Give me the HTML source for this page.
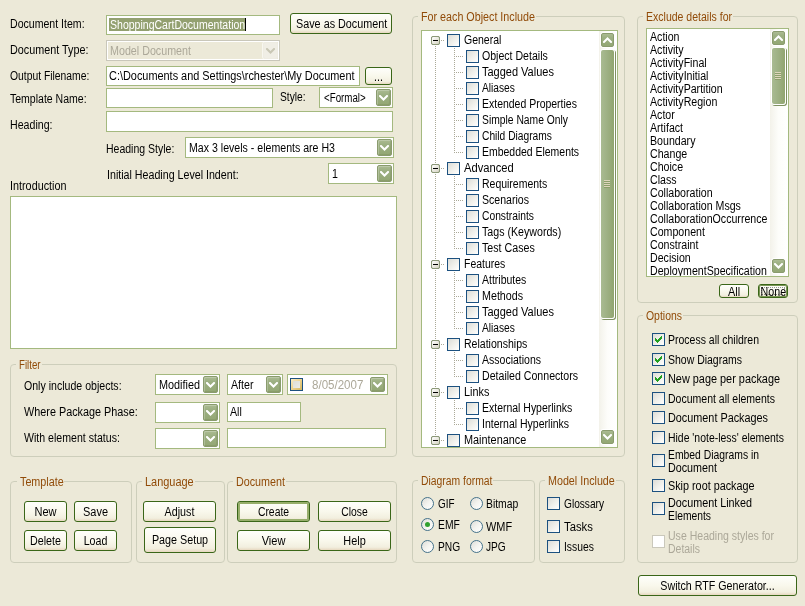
<!DOCTYPE html>
<html><head><meta charset="utf-8"><title>Generate RTF Documentation</title>
<style>
html,body{margin:0;padding:0}
body{width:805px;height:606px;background:#ECE9D8;position:relative;overflow:hidden;font-family:"Liberation Sans",sans-serif;font-size:11px;color:#000}
.t{position:absolute;white-space:pre;line-height:13px;height:13px;font-size:12px;transform:scaleX(.885);transform-origin:0 0}
#w{position:absolute;left:0;top:0;width:805px;height:606px;will-change:transform}
.dis{color:#ACA899}
.edit{position:absolute;box-sizing:border-box;border:1px solid #A4B97F;background:#fff}
.edis{border-color:#C9C7BA;background:#ECE9D8;box-shadow:inset 0 0 0 1px #fff}
.clip{position:absolute;left:0;top:0;right:0;bottom:0;overflow:hidden}
.sel{position:absolute;background:#93A070}
.caret{position:absolute;width:1px;height:13px;background:#000}
.dd{position:absolute;right:1px;top:1px;width:15px;box-sizing:border-box;border:1px solid #8A9B6E;border-radius:2px;background:linear-gradient(180deg,#ABBB92 0%,#9DB083 30%,#93A774 100%);box-shadow:inset 1px 1px 0 rgba(255,255,255,.22),inset -1px -1px 0 rgba(70,90,40,.12)}
.dd .chv{position:absolute;left:2px;top:5px}
.ddis{border-color:#EEECE2;background:#F0EEE5;box-shadow:-1px 0 0 #F8F7F0}
.ddis .chv path{stroke:#C9C7B5}
.btn{position:absolute;box-sizing:border-box;border:1px solid #3A6618;border-radius:3px;background:linear-gradient(180deg,#FEFEFB 0%,#F9F8EC 50%,#F2EFDF 85%,#E7D8C0 100%);text-align:center}
.bt{display:block;position:relative;top:1px;font-size:12px;white-space:pre;transform:scaleX(.885);transform-origin:50% 50%}
.def{box-shadow:inset 0 0 0 2px #97AE6B}
.sm{border-radius:3px}
.foc{box-shadow:inset 0 0 0 1px #7B9656}
.foc:after{content:"";position:absolute;left:2px;top:2px;right:2px;bottom:2px;border:1px dotted rgba(0,0,0,.4)}
.grp{position:absolute;box-sizing:border-box;border:1px solid #CDCEBB;border-radius:4px}
.gl{color:#914B08}
.gbg{position:absolute;height:3px;background:#ECE9D8;width:60px}
.chk{position:absolute;width:13px;height:13px;box-sizing:border-box;border:1px solid #1C5180;background:linear-gradient(135deg,#DCDCD7 0%,#EFEFEA 50%,#FFFFFF 100%)}
.cdis{border-color:#CAC8BB;background:#fff}
.rad{position:absolute;width:13px;height:13px;box-sizing:border-box;border:1px solid #44728A;border-radius:50%;background:linear-gradient(135deg,#DCDCD7 0%,#F3F3EF 50%,#FFFFFF 100%)}
.rad i{position:absolute;left:3px;top:3px;width:5px;height:5px;border-radius:50%;background:#2FA02F}
.dchk{position:absolute;left:2px;top:3px;width:13px;height:13px;box-sizing:border-box;border:1px solid #1C5180;background:linear-gradient(135deg,#FBEFCB 0%,#EDD28C 50%,#D2B660 100%)}
.dchk:after{content:"";position:absolute;left:2px;top:2px;width:7px;height:7px;background:linear-gradient(135deg,#DEDED6,#ECECE6)}
.dp .dd{right:2px;top:2px;height:15px !important}
.dp .dd .chv{top:4px}
.hd{position:absolute;height:1px;background-image:linear-gradient(90deg,#ABA998 50%,transparent 50%);background-size:2px 1px}
.vd{position:absolute;width:1px;background-image:linear-gradient(180deg,#ABA998 50%,transparent 50%);background-size:1px 2px}
.exp{position:absolute;width:9px;height:9px;box-sizing:border-box;border:1px solid #8B9878;border-radius:2px;background:linear-gradient(135deg,#fff,#D5D3C2)}
.exp i{position:absolute;left:1px;top:3px;width:5px;height:1px;background:#000}
.sb{position:absolute;width:17px;background:linear-gradient(90deg,#F3F2EA 0%,#FDFDFA 50%,#FFFFFF 100%)}
.sbb{position:absolute;left:1px;width:15px;height:16px;box-sizing:border-box;border:1px solid #fff;border-radius:3px;background:#fff}
.sbb:before{content:"";position:absolute;left:0;top:0;right:0;bottom:0;border:1px solid #8A9B6E;border-radius:2px;background:linear-gradient(180deg,#ABBB92 0%,#9DB083 30%,#93A774 100%)}
.sbb .chv{position:absolute;left:2px;top:4px}
.sbt{position:absolute;left:1px;width:15px;box-sizing:border-box;border:1px solid #fff;border-radius:3px;background:linear-gradient(90deg,#A9BB92 0%,#9DB083 50%,#91A570 100%);box-shadow:1px 1px 0 #7F9162}
.sbt b{position:absolute;left:3px;top:50%;margin-top:-4px;width:6px;height:8px;background-image:linear-gradient(180deg,#DDD5BC 50%,#8C9F6B 50%);background-size:6px 2px}
</style></head>
<body>
<div id="w">
<span class="t " style="left:10px;top:18px;transform:scaleX(0.8807);">Document Item:</span>
<div class="edit" style="left:106px;top:15px;width:174px;height:20px;"><span class="sel" style="left:2px;top:2px;width:136px;height:13px"></span><span class="t" style="left:3px;top:3px;color:#fff;transform:scaleX(0.8773)">ShoppingCartDocumentation</span><span class="caret" style="left:138px;top:2px"></span></div>
<div class="btn " style="left:290px;top:13px;width:102px;height:21px;"><span class="bt" style="line-height:19px;transform:scaleX(0.8995);">Save as Document</span></div>
<span class="t " style="left:10px;top:44px;transform:scaleX(0.8994);">Document Type:</span>
<div class="edit edis" style="left:106px;top:40px;width:174px;height:21px;"><span class="t dis" style="left:3px;top:4px;transform:scaleX(0.8929);">Model Document</span><span class="dd ddis" style="height:17px"><svg class="chv" width="9" height="6" viewBox="0 0 9 6"><path d="M1 1 L4.5 4.5 L8 1" fill="none" stroke="#fff" stroke-width="2" stroke-linecap="square" stroke-linejoin="miter"/></svg></span></div>
<span class="t " style="left:10px;top:70px;transform:scaleX(0.8615);">Output Filename:</span>
<div class="edit" style="left:106px;top:66px;width:254px;height:20px;"><span class="t " style="left:2px;top:3px;transform:scaleX(0.9088);">C:\Documents and Settings\rchester\My Document</span></div>
<div class="btn " style="left:365px;top:67px;width:27px;height:18px;"><span class="bt" style="line-height:16px;">...</span></div>
<span class="t " style="left:10px;top:93px;transform:scaleX(0.8767);">Template Name:</span>
<div class="edit" style="left:106px;top:88px;width:167px;height:20px;"></div>
<span class="t " style="left:280px;top:91px;transform:scaleX(0.8529);">Style:</span>
<div class="edit" style="left:319px;top:87px;width:74px;height:21px;"><span class="t " style="left:4px;top:4px;transform:scaleX(0.8119);">&lt;Formal&gt;</span><span class="dd" style="height:17px"><svg class="chv" width="9" height="6" viewBox="0 0 9 6"><path d="M1 1 L4.5 4.5 L8 1" fill="none" stroke="#fff" stroke-width="2" stroke-linecap="square" stroke-linejoin="miter"/></svg></span></div>
<span class="t " style="left:10px;top:119px;transform:scaleX(0.8846);">Heading:</span>
<div class="edit" style="left:106px;top:111px;width:287px;height:21px;"></div>
<span class="t " style="left:106px;top:143px;transform:scaleX(0.8751);">Heading Style:</span>
<div class="edit" style="left:185px;top:137px;width:209px;height:21px;"><span class="t " style="left:3px;top:4px;transform:scaleX(0.8827);">Max 3 levels - elements are H3</span><span class="dd" style="height:17px"><svg class="chv" width="9" height="6" viewBox="0 0 9 6"><path d="M1 1 L4.5 4.5 L8 1" fill="none" stroke="#fff" stroke-width="2" stroke-linecap="square" stroke-linejoin="miter"/></svg></span></div>
<span class="t " style="left:107px;top:169px;transform:scaleX(0.8885);">Initial Heading Level Indent:</span>
<div class="edit" style="left:328px;top:163px;width:66px;height:21px;"><span class="t " style="left:3px;top:4px;">1</span><span class="dd" style="height:17px"><svg class="chv" width="9" height="6" viewBox="0 0 9 6"><path d="M1 1 L4.5 4.5 L8 1" fill="none" stroke="#fff" stroke-width="2" stroke-linecap="square" stroke-linejoin="miter"/></svg></span></div>
<span class="t " style="left:10px;top:180px;transform:scaleX(0.9008);">Introduction</span>
<div class="edit" style="left:10px;top:196px;width:387px;height:153px;"></div>
<div class="grp" style="left:10px;top:364px;width:387px;height:93px;"><span class="gbg" style="left:5px;top:-2px;width:25.5px;"></span><span class="t gl" style="left:8px;top:-6px;transform:scaleX(0.8061);">Filter</span></div>
<span class="t " style="left:23.6px;top:380px;transform:scaleX(0.8814);">Only include objects:</span>
<div class="edit" style="left:155px;top:374px;width:65px;height:21px;"><span class="t " style="left:3px;top:4px;transform:scaleX(0.9039);">Modified</span><span class="dd" style="height:17px"><svg class="chv" width="9" height="6" viewBox="0 0 9 6"><path d="M1 1 L4.5 4.5 L8 1" fill="none" stroke="#fff" stroke-width="2" stroke-linecap="square" stroke-linejoin="miter"/></svg></span></div>
<div class="edit" style="left:227px;top:374px;width:56px;height:21px;"><span class="t " style="left:3px;top:4px;transform:scaleX(0.8878);">After</span><span class="dd" style="height:17px"><svg class="chv" width="9" height="6" viewBox="0 0 9 6"><path d="M1 1 L4.5 4.5 L8 1" fill="none" stroke="#fff" stroke-width="2" stroke-linecap="square" stroke-linejoin="miter"/></svg></span></div>
<div class="edit dp" style="left:287px;top:374px;width:101px;height:21px;"><span class="dchk"></span><span class="t dis" style="left:24px;top:4px;transform:scaleX(0.9627);">8/05/2007</span><span class="dd" style="height:17px"><svg class="chv" width="9" height="6" viewBox="0 0 9 6"><path d="M1 1 L4.5 4.5 L8 1" fill="none" stroke="#fff" stroke-width="2" stroke-linecap="square" stroke-linejoin="miter"/></svg></span></div>
<span class="t " style="left:23.6px;top:406px;transform:scaleX(0.9026);">Where Package Phase:</span>
<div class="edit" style="left:155px;top:402px;width:65px;height:21px;"><span class="dd" style="height:17px"><svg class="chv" width="9" height="6" viewBox="0 0 9 6"><path d="M1 1 L4.5 4.5 L8 1" fill="none" stroke="#fff" stroke-width="2" stroke-linecap="square" stroke-linejoin="miter"/></svg></span></div>
<div class="edit" style="left:227px;top:402px;width:74px;height:20px;"><span class="t " style="left:2px;top:3px;">All</span></div>
<span class="t " style="left:23.6px;top:432px;transform:scaleX(0.8821);">With element status:</span>
<div class="edit" style="left:155px;top:428px;width:65px;height:21px;"><span class="dd" style="height:17px"><svg class="chv" width="9" height="6" viewBox="0 0 9 6"><path d="M1 1 L4.5 4.5 L8 1" fill="none" stroke="#fff" stroke-width="2" stroke-linecap="square" stroke-linejoin="miter"/></svg></span></div>
<div class="edit" style="left:227px;top:428px;width:159px;height:20px;"></div>
<div class="grp" style="left:10px;top:481px;width:122px;height:82px;"><span class="gbg" style="left:5.5px;top:-2px;width:47.7px;"></span><span class="t gl" style="left:8.5px;top:-6px;transform:scaleX(0.8973);">Template</span></div>
<div class="btn " style="left:24px;top:501px;width:43px;height:21px;"><span class="bt" style="line-height:19px;transform:scaleX(0.9202);">New</span></div>
<div class="btn " style="left:74px;top:501px;width:43px;height:21px;"><span class="bt" style="line-height:19px;transform:scaleX(0.9138);">Save</span></div>
<div class="btn " style="left:24px;top:530px;width:43px;height:21px;"><span class="bt" style="line-height:19px;transform:scaleX(0.8937);">Delete</span></div>
<div class="btn " style="left:74px;top:530px;width:43px;height:21px;"><span class="bt" style="line-height:19px;transform:scaleX(0.8875);">Load</span></div>
<div class="grp" style="left:136px;top:481px;width:89px;height:82px;"><span class="gbg" style="left:5px;top:-2px;width:52.7px;"></span><span class="t gl" style="left:8px;top:-6px;transform:scaleX(0.9121);">Language</span></div>
<div class="btn " style="left:143px;top:501px;width:73px;height:21px;"><span class="bt" style="line-height:19px;transform:scaleX(0.8933);">Adjust</span></div>
<div class="btn " style="left:144px;top:527px;width:72px;height:26px;"><span class="bt" style="line-height:24px;top:0px;transform:scaleX(0.8961);">Page Setup</span></div>
<div class="grp" style="left:227px;top:481px;width:170px;height:82px;"><span class="gbg" style="left:5px;top:-2px;width:53px;"></span><span class="t gl" style="left:8px;top:-6px;transform:scaleX(0.8957);">Document</span></div>
<div class="btn def" style="left:237px;top:501px;width:73px;height:21px;"><span class="bt" style="line-height:19px;transform:scaleX(0.8659);">Create</span></div>
<div class="btn " style="left:318px;top:501px;width:73px;height:21px;"><span class="bt" style="line-height:19px;transform:scaleX(0.8635);">Close</span></div>
<div class="btn " style="left:237px;top:530px;width:73px;height:21px;"><span class="bt" style="line-height:19px;transform:scaleX(0.9187);">View</span></div>
<div class="btn " style="left:318px;top:530px;width:73px;height:21px;"><span class="bt" style="line-height:19px;transform:scaleX(0.9073);">Help</span></div>
<div class="grp" style="left:412px;top:16px;width:213px;height:441px;"><span class="gbg" style="left:5px;top:-2px;width:118px;"></span><span class="t gl" style="left:8px;top:-6px;transform:scaleX(0.8948);">For each Object Include</span></div>
<div class="edit" style="left:421px;top:30px;width:197px;height:418px;"><div class="clip"><span class="hd" style="left:19px;top:9px;width:4px"></span><span class="exp" style="left:9px;top:5px"><i></i></span><span class="chk" style="left:25px;top:3px"></span><span class="t" style="left:41.5px;top:3px;transform:scaleX(0.8758)">General</span><span class="hd" style="left:34px;top:25px;width:8px"></span><span class="chk" style="left:44px;top:19px"></span><span class="t" style="left:60px;top:19px;transform:scaleX(0.8808)">Object Details</span><span class="hd" style="left:34px;top:41px;width:8px"></span><span class="chk" style="left:44px;top:35px"></span><span class="t" style="left:60px;top:35px;transform:scaleX(0.9157)">Tagged Values</span><span class="hd" style="left:34px;top:57px;width:8px"></span><span class="chk" style="left:44px;top:51px"></span><span class="t" style="left:60px;top:51px;transform:scaleX(0.8504)">Aliases</span><span class="hd" style="left:34px;top:73px;width:8px"></span><span class="chk" style="left:44px;top:67px"></span><span class="t" style="left:60px;top:67px;transform:scaleX(0.8728)">Extended Properties</span><span class="hd" style="left:34px;top:89px;width:8px"></span><span class="chk" style="left:44px;top:83px"></span><span class="t" style="left:60px;top:83px;transform:scaleX(0.8597)">Simple Name Only</span><span class="hd" style="left:34px;top:105px;width:8px"></span><span class="chk" style="left:44px;top:99px"></span><span class="t" style="left:60px;top:99px;transform:scaleX(0.8521)">Child Diagrams</span><span class="hd" style="left:34px;top:121px;width:8px"></span><span class="chk" style="left:44px;top:115px"></span><span class="t" style="left:60px;top:115px;transform:scaleX(0.8716)">Embedded Elements</span><span class="hd" style="left:19px;top:137px;width:4px"></span><span class="exp" style="left:9px;top:133px"><i></i></span><span class="chk" style="left:25px;top:131px"></span><span class="t" style="left:41.5px;top:131px;transform:scaleX(0.9311)">Advanced</span><span class="hd" style="left:34px;top:153px;width:8px"></span><span class="chk" style="left:44px;top:147px"></span><span class="t" style="left:60px;top:147px;transform:scaleX(0.8728)">Requirements</span><span class="hd" style="left:34px;top:169px;width:8px"></span><span class="chk" style="left:44px;top:163px"></span><span class="t" style="left:60px;top:163px;transform:scaleX(0.8806)">Scenarios</span><span class="hd" style="left:34px;top:185px;width:8px"></span><span class="chk" style="left:44px;top:179px"></span><span class="t" style="left:60px;top:179px;transform:scaleX(0.8566)">Constraints</span><span class="hd" style="left:34px;top:201px;width:8px"></span><span class="chk" style="left:44px;top:195px"></span><span class="t" style="left:60px;top:195px;transform:scaleX(0.8862)">Tags (Keywords)</span><span class="hd" style="left:34px;top:217px;width:8px"></span><span class="chk" style="left:44px;top:211px"></span><span class="t" style="left:60px;top:211px;transform:scaleX(0.8895)">Test Cases</span><span class="hd" style="left:19px;top:233px;width:4px"></span><span class="exp" style="left:9px;top:229px"><i></i></span><span class="chk" style="left:25px;top:227px"></span><span class="t" style="left:41.5px;top:227px;transform:scaleX(0.8699)">Features</span><span class="hd" style="left:34px;top:249px;width:8px"></span><span class="chk" style="left:44px;top:243px"></span><span class="t" style="left:60px;top:243px;transform:scaleX(0.8737)">Attributes</span><span class="hd" style="left:34px;top:265px;width:8px"></span><span class="chk" style="left:44px;top:259px"></span><span class="t" style="left:60px;top:259px;transform:scaleX(0.8929)">Methods</span><span class="hd" style="left:34px;top:281px;width:8px"></span><span class="chk" style="left:44px;top:275px"></span><span class="t" style="left:60px;top:275px;transform:scaleX(0.9157)">Tagged Values</span><span class="hd" style="left:34px;top:297px;width:8px"></span><span class="chk" style="left:44px;top:291px"></span><span class="t" style="left:60px;top:291px;transform:scaleX(0.8504)">Aliases</span><span class="hd" style="left:19px;top:313px;width:4px"></span><span class="exp" style="left:9px;top:309px"><i></i></span><span class="chk" style="left:25px;top:307px"></span><span class="t" style="left:41.5px;top:307px;transform:scaleX(0.8786)">Relationships</span><span class="hd" style="left:34px;top:329px;width:8px"></span><span class="chk" style="left:44px;top:323px"></span><span class="t" style="left:60px;top:323px;transform:scaleX(0.8772)">Associations</span><span class="hd" style="left:34px;top:345px;width:8px"></span><span class="chk" style="left:44px;top:339px"></span><span class="t" style="left:60px;top:339px;transform:scaleX(0.8829)">Detailed Connectors</span><span class="hd" style="left:19px;top:361px;width:4px"></span><span class="exp" style="left:9px;top:357px"><i></i></span><span class="chk" style="left:25px;top:355px"></span><span class="t" style="left:41.5px;top:355px;transform:scaleX(0.9031)">Links</span><span class="hd" style="left:34px;top:377px;width:8px"></span><span class="chk" style="left:44px;top:371px"></span><span class="t" style="left:60px;top:371px;transform:scaleX(0.8726)">External Hyperlinks</span><span class="hd" style="left:34px;top:393px;width:8px"></span><span class="chk" style="left:44px;top:387px"></span><span class="t" style="left:60px;top:387px;transform:scaleX(0.8765)">Internal Hyperlinks</span><span class="hd" style="left:19px;top:409px;width:4px"></span><span class="exp" style="left:9px;top:405px"><i></i></span><span class="chk" style="left:25px;top:403px"></span><span class="t" style="left:41.5px;top:403px;transform:scaleX(0.9066)">Maintenance</span><span class="vd" style="left:13px;top:15px;height:390px"></span><span class="vd" style="left:32px;top:17px;height:105px"></span><span class="vd" style="left:32px;top:145px;height:73px"></span><span class="vd" style="left:32px;top:241px;height:57px"></span><span class="vd" style="left:32px;top:321px;height:25px"></span><span class="vd" style="left:32px;top:369px;height:25px"></span><span class="exp" style="left:9px;top:5px"><i></i></span><span class="exp" style="left:9px;top:133px"><i></i></span><span class="exp" style="left:9px;top:229px"><i></i></span><span class="exp" style="left:9px;top:309px"><i></i></span><span class="exp" style="left:9px;top:357px"><i></i></span><span class="exp" style="left:9px;top:405px"><i></i></span><div class="sb" style="left:177px;top:0px;height:416px"><span class="sbb" style="top:1px"><svg class="chv" width="9" height="6" viewBox="0 0 9 6"><path d="M1 5 L4.5 1.5 L8 5" fill="none" stroke="#fff" stroke-width="2" stroke-linecap="square" stroke-linejoin="miter"/></svg></span><span class="sbt" style="top:18px;height:270px"><b></b></span><span class="sbb" style="bottom:2px"><svg class="chv" width="9" height="6" viewBox="0 0 9 6"><path d="M1 1 L4.5 4.5 L8 1" fill="none" stroke="#fff" stroke-width="2" stroke-linecap="square" stroke-linejoin="miter"/></svg></span></div></div></div>
<div class="grp" style="left:412px;top:480px;width:123px;height:83px;"><span class="gbg" style="left:5px;top:-2px;width:75.4px;"></span><span class="t gl" style="left:8px;top:-6px;transform:scaleX(0.8635);">Diagram format</span></div>
<span class="rad" style="left:421px;top:497px"></span>
<span class="t " style="left:438px;top:498px;transform:scaleX(0.825);">GIF</span>
<span class="rad" style="left:470px;top:497px"></span>
<span class="t " style="left:486px;top:498px;transform:scaleX(0.8646);">Bitmap</span>
<span class="rad" style="left:421px;top:518px"><i></i></span>
<span class="t " style="left:438px;top:519px;transform:scaleX(0.8602);">EMF</span>
<span class="rad" style="left:470px;top:520px"></span>
<span class="t " style="left:486px;top:521px;transform:scaleX(0.9108);">WMF</span>
<span class="rad" style="left:421px;top:540px"></span>
<span class="t " style="left:438px;top:541px;transform:scaleX(0.8533);">PNG</span>
<span class="rad" style="left:470px;top:540px"></span>
<span class="t " style="left:486px;top:541px;transform:scaleX(0.8439);">JPG</span>
<div class="grp" style="left:539px;top:480px;width:86px;height:83px;"><span class="gbg" style="left:5px;top:-2px;width:70.8px;"></span><span class="t gl" style="left:8px;top:-6px;transform:scaleX(0.894);">Model Include</span></div>
<span class="chk" style="left:547px;top:497px"></span>
<span class="t " style="left:564px;top:498px;transform:scaleX(0.8449);">Glossary</span>
<span class="chk" style="left:547px;top:520px"></span>
<span class="t " style="left:564px;top:521px;transform:scaleX(0.9385);">Tasks</span>
<span class="chk" style="left:547px;top:540px"></span>
<span class="t " style="left:564px;top:541px;transform:scaleX(0.862);">Issues</span>
<div class="grp" style="left:637px;top:16px;width:161px;height:287px;"><span class="gbg" style="left:4.5px;top:-2px;width:90px;"></span><span class="t gl" style="left:7.5px;top:-6px;transform:scaleX(0.877);">Exclude details for</span></div>
<div class="edit" style="left:646px;top:28px;width:143px;height:249px;"><div class="clip"><span class="t" style="left:3px;top:2px">Action</span><span class="t" style="left:3px;top:15px">Activity</span><span class="t" style="left:3px;top:28px">ActivityFinal</span><span class="t" style="left:3px;top:41px">ActivityInitial</span><span class="t" style="left:3px;top:54px">ActivityPartition</span><span class="t" style="left:3px;top:67px">ActivityRegion</span><span class="t" style="left:3px;top:80px">Actor</span><span class="t" style="left:3px;top:93px">Artifact</span><span class="t" style="left:3px;top:106px">Boundary</span><span class="t" style="left:3px;top:119px">Change</span><span class="t" style="left:3px;top:132px">Choice</span><span class="t" style="left:3px;top:145px">Class</span><span class="t" style="left:3px;top:158px">Collaboration</span><span class="t" style="left:3px;top:171px">Collaboration Msgs</span><span class="t" style="left:3px;top:184px">CollaborationOccurrence</span><span class="t" style="left:3px;top:197px">Component</span><span class="t" style="left:3px;top:210px">Constraint</span><span class="t" style="left:3px;top:223px">Decision</span><span class="t" style="left:3px;top:236px">DeploymentSpecification</span><div class="sb" style="left:123px;top:0px;height:247px"><span class="sbb" style="top:1px"><svg class="chv" width="9" height="6" viewBox="0 0 9 6"><path d="M1 5 L4.5 1.5 L8 5" fill="none" stroke="#fff" stroke-width="2" stroke-linecap="square" stroke-linejoin="miter"/></svg></span><span class="sbt" style="top:18px;height:58px"><b></b></span><span class="sbb" style="bottom:2px"><svg class="chv" width="9" height="6" viewBox="0 0 9 6"><path d="M1 1 L4.5 4.5 L8 1" fill="none" stroke="#fff" stroke-width="2" stroke-linecap="square" stroke-linejoin="miter"/></svg></span></div></div></div>
<div class="btn sm" style="left:719px;top:284px;width:30px;height:14px;"><span class="bt" style="line-height:12px;transform:scaleX(0.9068);">All</span></div>
<div class="btn sm foc" style="left:758px;top:284px;width:30px;height:14px;"><span class="bt" style="line-height:12px;transform:scaleX(0.8924);">None</span></div>
<div class="grp" style="left:637px;top:315px;width:161px;height:248px;"><span class="gbg" style="left:5px;top:-2px;width:40px;"></span><span class="t gl" style="left:8px;top:-6px;transform:scaleX(0.8704);">Options</span></div>
<span class="chk" style="left:652px;top:333px"><svg width="7" height="7" viewBox="0 0 7 7" style="position:absolute;left:2px;top:2px" shape-rendering="crispEdges"><path fill="#22A020" d="M0 2h1v3h-1zM1 3h1v3h-1zM2 4h1v3h-1zM3 3h1v3h-1zM4 2h1v3h-1zM5 1h1v3h-1zM6 0h1v3h-1z"/></svg></span>
<span class="t " style="left:667.8px;top:334px;transform:scaleX(0.8746);">Process all children</span>
<span class="chk" style="left:652px;top:353px"><svg width="7" height="7" viewBox="0 0 7 7" style="position:absolute;left:2px;top:2px" shape-rendering="crispEdges"><path fill="#22A020" d="M0 2h1v3h-1zM1 3h1v3h-1zM2 4h1v3h-1zM3 3h1v3h-1zM4 2h1v3h-1zM5 1h1v3h-1zM6 0h1v3h-1z"/></svg></span>
<span class="t " style="left:667.8px;top:354px;transform:scaleX(0.8736);">Show Diagrams</span>
<span class="chk" style="left:652px;top:372px"><svg width="7" height="7" viewBox="0 0 7 7" style="position:absolute;left:2px;top:2px" shape-rendering="crispEdges"><path fill="#22A020" d="M0 2h1v3h-1zM1 3h1v3h-1zM2 4h1v3h-1zM3 3h1v3h-1zM4 2h1v3h-1zM5 1h1v3h-1zM6 0h1v3h-1z"/></svg></span>
<span class="t " style="left:667.8px;top:373px;transform:scaleX(0.9075);">New page per package</span>
<span class="chk" style="left:652px;top:392px"></span>
<span class="t " style="left:667.8px;top:393px;transform:scaleX(0.8766);">Document all elements</span>
<span class="chk" style="left:652px;top:411px"></span>
<span class="t " style="left:667.8px;top:412px;transform:scaleX(0.9031);">Document Packages</span>
<span class="chk" style="left:652px;top:431px"></span>
<span class="t " style="left:667.8px;top:432px;transform:scaleX(0.8701);">Hide 'note-less' elements</span>
<span class="chk" style="left:652px;top:454px"></span>
<span class="t " style="left:667.8px;top:449px;transform:scaleX(0.8636);">Embed Diagrams in</span>
<span class="t " style="left:667.8px;top:462px;transform:scaleX(0.8957);">Document</span>
<span class="chk" style="left:652px;top:479px"></span>
<span class="t " style="left:667.8px;top:480px;transform:scaleX(0.9005);">Skip root package</span>
<span class="chk" style="left:652px;top:502px"></span>
<span class="t " style="left:667.8px;top:497px;transform:scaleX(0.8994);">Document Linked</span>
<span class="t " style="left:667.8px;top:510px;transform:scaleX(0.8595);">Elements</span>
<span class="chk cdis" style="left:652px;top:535px"></span>
<span class="t dis" style="left:667.8px;top:530px;transform:scaleX(0.878);">Use Heading styles for</span>
<span class="t dis" style="left:667.8px;top:543px;transform:scaleX(0.8722);">Details</span>
<div class="btn " style="left:638px;top:575px;width:159px;height:21px;"><span class="bt" style="line-height:19px;transform:scaleX(0.8903);">Switch RTF Generator...</span></div>
</div>
</body></html>
